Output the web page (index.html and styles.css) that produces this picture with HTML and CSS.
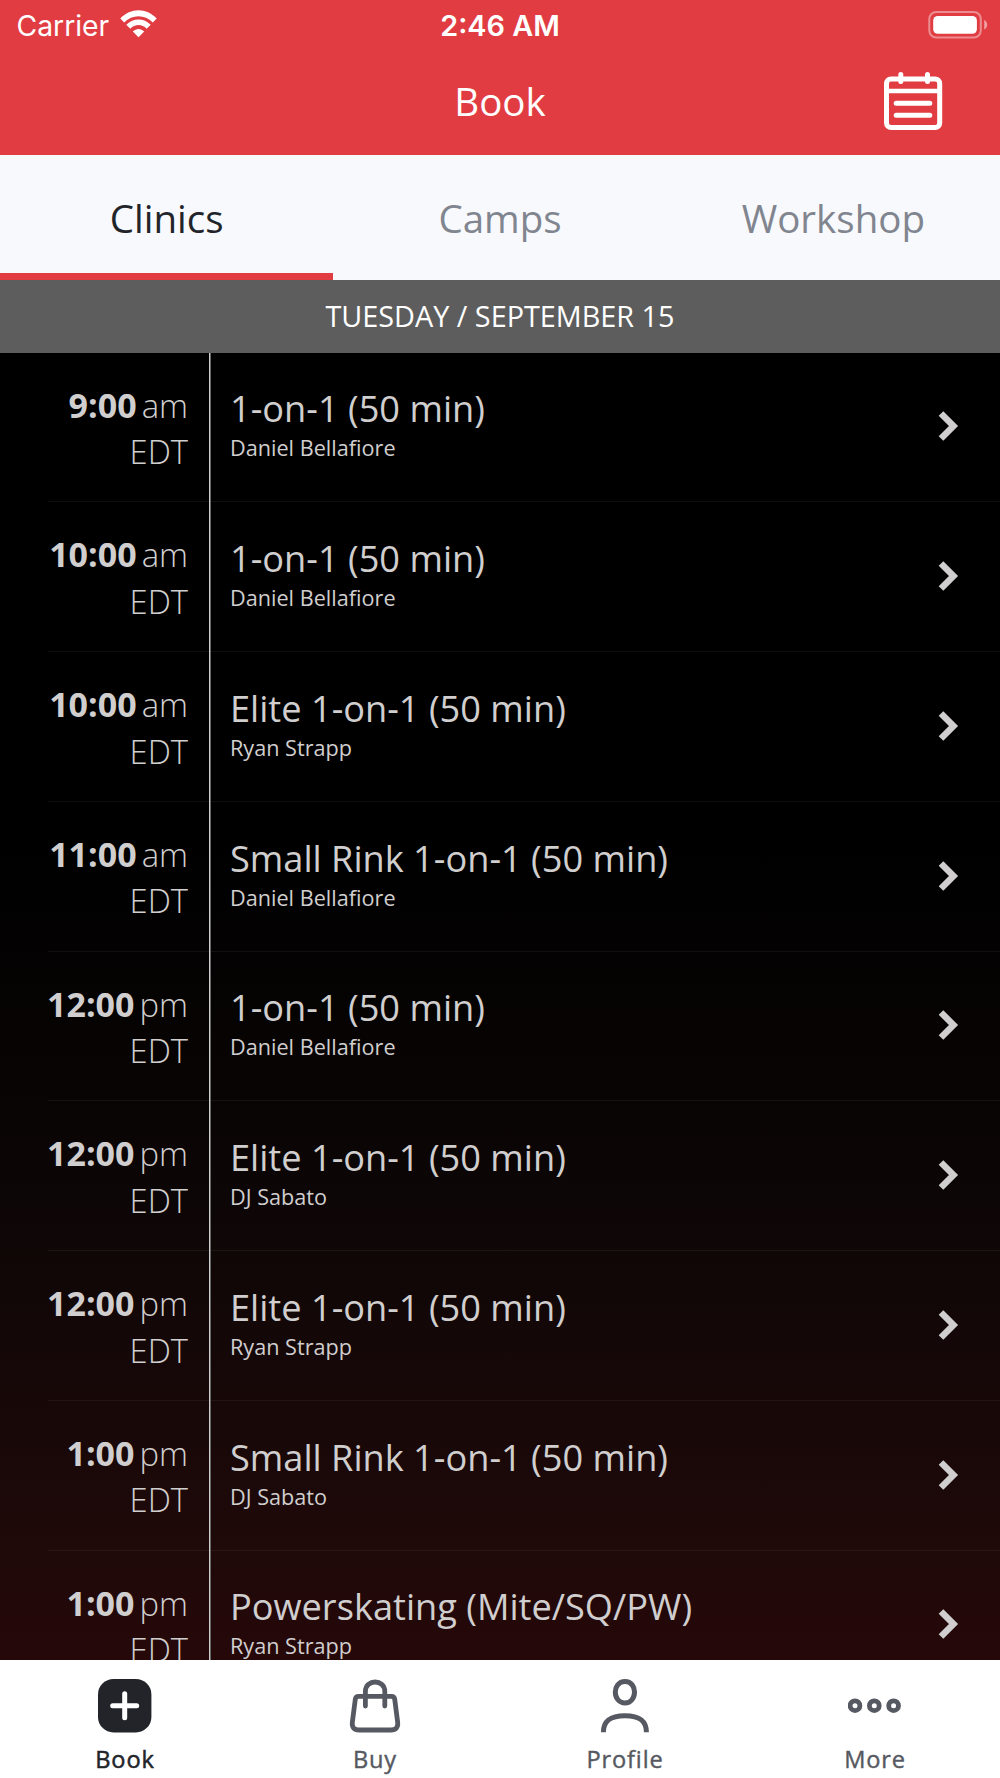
FILE: index.html
```html
<!DOCTYPE html>
<html lang="en">
<head>
<meta charset="utf-8">
<title>Book</title>
<link rel="stylesheet" href="styles.css">
</head>
<body>
<div class="app">
  <header class="header">
    <div class="status">
      <div class="status-left"><span class="carrier">Carrier</span>
        <svg class="wifi" viewBox="0 0 37 28" width="37" height="28"><g fill="#fff"><path d="M0.3 8.6C10.500-2.400 26.500-2.400 36.700 8.600L32.800 12.500C24.800 4.100 12.200 4.100 4.200 12.500Z"/><path d="M6.300 14.700C13.200 7.600 23.800 7.600 30.700 14.700L26.700 18.700C22 13.900 15 13.900 10.300 18.700Z"/><path d="M12.800 21.500C16.200 18.100 20.800 18.100 24.200 21.500L18.500 27.200Z"/></g></svg>
      </div>
      <div class="clock">2:46 AM</div>
      <div class="status-right">
        <svg viewBox="0 0 60 28" width="60" height="28"><rect x="1.300" y="1" width="51.500" height="25.500" rx="7" fill="none" stroke="#fff" stroke-opacity=".42" stroke-width="2"/><rect x="5.200" y="5" width="43.700" height="17.700" rx="4.500" fill="#fff"/><path d="M56.200 9C60.200 10.500 60.200 17 56.200 18.500Z" fill="#fff" fill-opacity=".5"/></svg>
      </div>
    </div>
    <div class="nav">
      <h1 class="nav-title">Book</h1>
      <svg class="calendar" viewBox="0 0 60 60" width="60" height="60"><g fill="none" stroke="#fff" stroke-width="5" stroke-linecap="round"><rect x="3.500" y="8" width="53.200" height="48.500" rx="4.500"/><path d="M17.800 3.500V10.500M44.500 3.500V10.500"/><path d="M4 20H56" stroke-width="4.500" stroke-linecap="butt"/><path d="M13.200 32.200H46.800M13.200 44.200H46.800"/></g></svg>
    </div>
  </header>

  <nav class="tabs">
    <div class="tab tab-active">Clinics</div>
    <div class="tab">Camps</div>
    <div class="tab">Workshop</div>
  </nav>

  <div class="date">TUESDAY / SEPTEMBER 15</div>

  <main class="list">
    <div class="row"><div class="time"><div><b>9:00</b><span>am</span></div><div>EDT</div></div><div class="info"><div class="name">1-on-1 (50 min)</div><div class="coach">Daniel Bellafiore</div></div><svg class="chev" viewBox="0 0 22 34" width="22" height="34"><path d="M4 4.500L16.500 17L4 29.500"/></svg></div>
    <div class="row"><div class="time"><div><b>10:00</b><span>am</span></div><div>EDT</div></div><div class="info"><div class="name">1-on-1 (50 min)</div><div class="coach">Daniel Bellafiore</div></div><svg class="chev" viewBox="0 0 22 34" width="22" height="34"><path d="M4 4.500L16.500 17L4 29.500"/></svg></div>
    <div class="row"><div class="time"><div><b>10:00</b><span>am</span></div><div>EDT</div></div><div class="info"><div class="name">Elite 1-on-1 (50 min)</div><div class="coach">Ryan Strapp</div></div><svg class="chev" viewBox="0 0 22 34" width="22" height="34"><path d="M4 4.500L16.500 17L4 29.500"/></svg></div>
    <div class="row"><div class="time"><div><b>11:00</b><span>am</span></div><div>EDT</div></div><div class="info"><div class="name">Small Rink 1-on-1 (50 min)</div><div class="coach">Daniel Bellafiore</div></div><svg class="chev" viewBox="0 0 22 34" width="22" height="34"><path d="M4 4.500L16.500 17L4 29.500"/></svg></div>
    <div class="row"><div class="time"><div><b>12:00</b><span>pm</span></div><div>EDT</div></div><div class="info"><div class="name">1-on-1 (50 min)</div><div class="coach">Daniel Bellafiore</div></div><svg class="chev" viewBox="0 0 22 34" width="22" height="34"><path d="M4 4.500L16.500 17L4 29.500"/></svg></div>
    <div class="row"><div class="time"><div><b>12:00</b><span>pm</span></div><div>EDT</div></div><div class="info"><div class="name">Elite 1-on-1 (50 min)</div><div class="coach">DJ Sabato</div></div><svg class="chev" viewBox="0 0 22 34" width="22" height="34"><path d="M4 4.500L16.500 17L4 29.500"/></svg></div>
    <div class="row"><div class="time"><div><b>12:00</b><span>pm</span></div><div>EDT</div></div><div class="info"><div class="name">Elite 1-on-1 (50 min)</div><div class="coach">Ryan Strapp</div></div><svg class="chev" viewBox="0 0 22 34" width="22" height="34"><path d="M4 4.500L16.500 17L4 29.500"/></svg></div>
    <div class="row"><div class="time"><div><b>1:00</b><span>pm</span></div><div>EDT</div></div><div class="info"><div class="name">Small Rink 1-on-1 (50 min)</div><div class="coach">DJ Sabato</div></div><svg class="chev" viewBox="0 0 22 34" width="22" height="34"><path d="M4 4.500L16.500 17L4 29.500"/></svg></div>
    <div class="row"><div class="time"><div><b>1:00</b><span>pm</span></div><div>EDT</div></div><div class="info"><div class="name">Powerskating (Mite/SQ/PW)</div><div class="coach">Ryan Strapp</div></div><svg class="chev" viewBox="0 0 22 34" width="22" height="34"><path d="M4 4.500L16.500 17L4 29.500"/></svg></div>
  </main>

  <footer class="bar">
    <div class="item item-active">
      <svg viewBox="0 0 54 54" width="54" height="54"><rect x="0" y="0" width="53.400" height="53.400" rx="15.500" fill="#222429"/><path d="M26.700 14.700V38.700M14.700 26.700H38.700" stroke="#fff" stroke-width="5" stroke-linecap="round"/></svg>
      <span>Book</span>
    </div>
    <div class="item">
      <svg viewBox="0 0 54 54" width="54" height="54"><g fill="none" stroke="#565961" stroke-width="4.800" stroke-linecap="round" stroke-linejoin="round"><path d="M10.500 17.300H43.500Q46.300 17.300 46.700 20.200L49.700 43.500Q50.300 51 43 51H11Q3.700 51 4.300 43.500L7.300 20.200Q7.700 17.300 10.500 17.300Z"/><path d="M17.400 27V12.500C17.400 -.2 36.800 -.2 36.800 12.500V27"/></g></svg>
      <span>Buy</span>
    </div>
    <div class="item">
      <svg viewBox="0 0 54 54" width="54" height="54"><g fill="none" stroke="#565961" stroke-width="5"><path d="M27 2.500C33.500 2.500 36.500 8 36.500 13C36.500 19 33 24 27 24C21 24 17.300 19 17.300 13C17.300 8 20.500 2.500 27 2.500Z"/><path d="M5.400 53.300C5.400 42 12 36.700 27 36.700C42 36.700 48.400 42 48.400 53.300"/></g></svg>
      <span>Profile</span>
    </div>
    <div class="item">
      <svg viewBox="0 0 54 54" width="54" height="54"><g fill="none" stroke="#565961" stroke-width="4.800"><circle cx="7" cy="26.700" r="4.900"/><circle cx="26.300" cy="26.700" r="4.900"/><circle cx="45.600" cy="26.700" r="4.900"/></g></svg>
      <span>More</span>
    </div>
  </footer>
</div>
</body>
</html>
```
FILE: styles.css
```css
* { box-sizing: border-box; }
body { margin: 0; background: #000; font-family: "Open Sans", "Noto Sans", sans-serif; }
.app { width: 1000px; height: 1778px; display: flex; flex-direction: column; overflow: hidden; }

.header { height: 155px; flex: none; background: #e13c42; color: #fff; }
.status { height: 50px; display: grid; grid-template-columns: 1fr auto 1fr; align-items: center; padding: 0 12px; font-family: Inter, sans-serif; font-size: 28.300px; line-height: 50px; }
.status > div { padding-top: 1px; }
.status .status-left { display: flex; align-items: center; gap: 10.500px; padding-left: 4.500px; }
.wifi { margin-bottom: 5px; }
.clock { font-weight: 600; font-size: 28.800px; }
.status-right { display: flex; justify-content: flex-end; }
.status-right svg { margin-bottom: 2px; }
.nav { height: 105px; display: grid; grid-template-columns: 1fr auto 1fr; align-items: center; padding: 0 57px; }
.nav-title { grid-column: 2; margin: 0 0 3px; font-weight: 400; font-size: 38.500px; line-height: 50px; }
.calendar { justify-self: end; margin-bottom: 3px; }

.tabs { height: 125px; flex: none; display: grid; grid-template-columns: repeat(3, 1fr); background: #f8f9fc; }
.tab { display: flex; align-items: center; justify-content: center; padding-top: 7px; border-bottom: 7px solid transparent; font-size: 38.500px; color: #81858f; }
.tab-active { color: #222429; border-color: #e13c42; }

.date { height: 73px; flex: none; display: flex; align-items: center; justify-content: center; padding-bottom: 2px; background: #5d5d5d; color: #fff; font-size: 28.800px; }

.list { flex: 1; min-height: 0; overflow: hidden; background: linear-gradient(#000 0%, #000 38%, #0d0606 65%, #1e0909 90%, #260809 100%); color: #d0cece; }
.row { height: 149.750px; display: grid; grid-template-columns: 210px 1fr 22px; padding-right: 41px; background: linear-gradient(rgba(255,255,255,.055), rgba(255,255,255,.055)) 48px 100% / 952px 1.300px no-repeat; }
.time { border-right: 1px solid #cdcdcd; box-shadow: 1px 0 #666; padding: 29.500px 21px 0 0; text-align: right; font-size: 32.800px; line-height: 46.500px; font-weight: 300; white-space: nowrap; }
.time b { font-weight: 700; font-size: 34px; line-height: 1; margin-right: 5px; }
.info { padding: 30.300px 0 0 20px; white-space: nowrap; }
.name { font-size: 36.180px; line-height: 50px; }
.coach { font-size: 21.650px; line-height: 30px; }
.chev { align-self: center; margin-bottom: 2.800px; fill: none; stroke: #d0cece; stroke-width: 6.500px; }

.bar { height: 118.500px; flex: none; display: grid; grid-template-columns: repeat(4, 1fr); background: #fff; }
.item { display: flex; flex-direction: column; align-items: center; padding-top: 19px; color: #565961; font-size: 23.600px; font-weight: 400; -webkit-text-stroke: .4px currentColor; line-height: 32px; letter-spacing: .85px; }
.item span { margin-top: 10.500px; }
.item-active { color: #222429; -webkit-text-stroke-width: .5px; }
```
